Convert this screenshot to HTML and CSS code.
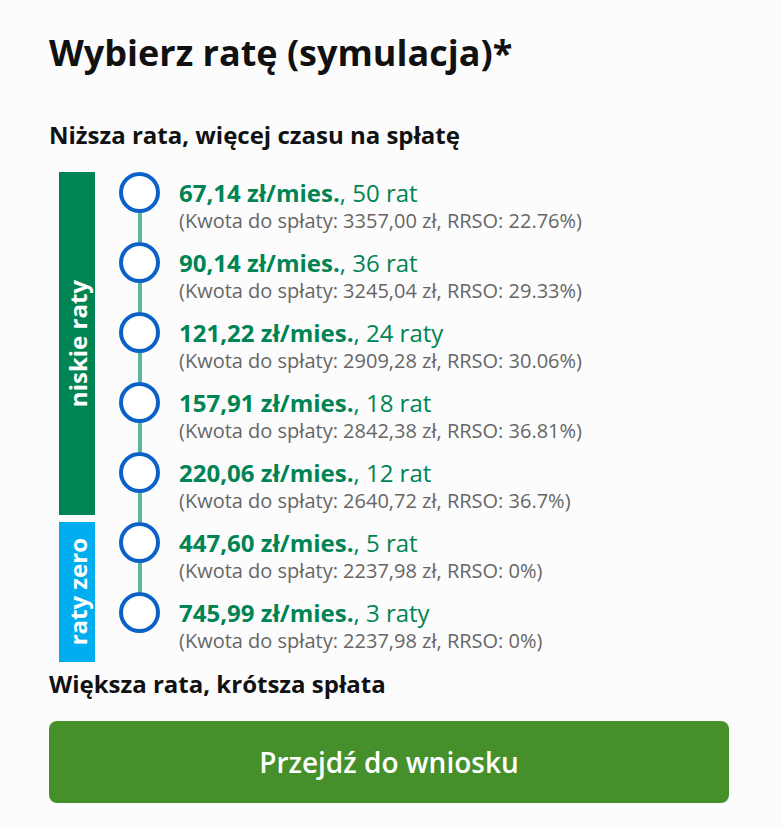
FILE: index.html
```html
<!DOCTYPE html>
<html lang="pl">
<head>
  <meta charset="UTF-8">
  <meta name="viewport" content="width=device-width, initial-scale=1.0">
  <title>Wybierz ratę</title>
  <link rel="stylesheet" href="styles.css">
</head>
<body>
  <div class="simulation">
    <h1 class="title">Wybierz ratę (symulacja)*</h1>
    <p class="hint top">Niższa rata, więcej czasu na spłatę</p>

    <div class="plan">
      <div class="labels">
        <div class="label low"><span>niskie raty</span></div>
        <div class="label zero"><span>raty zero</span></div>
      </div>
      <ul class="options">
        <li class="option">
          <div class="marker"><span class="dot"></span><span class="line"></span></div>
          <div class="info">
            <div class="price"><b>67,14 zł/mies.</b>, 50 rat</div>
            <div class="details">(Kwota do spłaty: 3357,00 zł, RRSO: 22.76%)</div>
          </div>
        </li>
        <li class="option">
          <div class="marker"><span class="dot"></span><span class="line"></span></div>
          <div class="info">
            <div class="price"><b>90,14 zł/mies.</b>, 36 rat</div>
            <div class="details">(Kwota do spłaty: 3245,04 zł, RRSO: 29.33%)</div>
          </div>
        </li>
        <li class="option">
          <div class="marker"><span class="dot"></span><span class="line"></span></div>
          <div class="info">
            <div class="price"><b>121,22 zł/mies.</b>, 24 raty</div>
            <div class="details">(Kwota do spłaty: 2909,28 zł, RRSO: 30.06%)</div>
          </div>
        </li>
        <li class="option">
          <div class="marker"><span class="dot"></span><span class="line"></span></div>
          <div class="info">
            <div class="price"><b>157,91 zł/mies.</b>, 18 rat</div>
            <div class="details">(Kwota do spłaty: 2842,38 zł, RRSO: 36.81%)</div>
          </div>
        </li>
        <li class="option">
          <div class="marker"><span class="dot"></span><span class="line"></span></div>
          <div class="info">
            <div class="price"><b>220,06 zł/mies.</b>, 12 rat</div>
            <div class="details">(Kwota do spłaty: 2640,72 zł, RRSO: 36.7%)</div>
          </div>
        </li>
        <li class="option">
          <div class="marker"><span class="dot"></span><span class="line"></span></div>
          <div class="info">
            <div class="price"><b>447,60 zł/mies.</b>, 5 rat</div>
            <div class="details">(Kwota do spłaty: 2237,98 zł, RRSO: 0%)</div>
          </div>
        </li>
        <li class="option">
          <div class="marker"><span class="dot"></span></div>
          <div class="info">
            <div class="price"><b>745,99 zł/mies.</b>, 3 raty</div>
            <div class="details">(Kwota do spłaty: 2237,98 zł, RRSO: 0%)</div>
          </div>
        </li>
      </ul>
    </div>

    <p class="hint">Większa rata, krótsza spłata</p>
    <button class="submit">Przejdź do wniosku</button>
  </div>
</body>
</html>
```

FILE: styles.css
```css
body {
  margin: 0;
  background-color: #fcfcfc;
  font-family: "Open Sans", sans-serif;
  color: #111;
}

.simulation {
  width: 680px;
  padding: 29px 0 0 49px;
}

.title {
  margin: 0;
  font-size: 36px;
  font-weight: 700;
  line-height: 48px;
}

.hint {
  margin: 6px 0 0;
  font-size: 24px;
  font-weight: 700;
  line-height: 32px;
}

.hint.top {
  margin-top: 42px;
}

.plan {
  display: flex;
  gap: 24px;
  margin: 21px 0 0 10px;
}

.labels {
  display: flex;
  flex-direction: column;
  gap: 7px;
  width: 36px;
}

.label {
  display: flex;
  align-items: center;
  justify-content: center;
  color: #fff;
  font-size: 24px;
  font-weight: 700;
}

.label span {
  writing-mode: vertical-rl;
  transform: rotate(180deg);
}

.label.low {
  background-color: #008453;
  height: 343px;
}

.label.zero {
  background-color: #00aeef;
  height: 140px;
}

.options {
  list-style: none;
  margin: 0;
  padding: 0;
}

.option {
  display: flex;
  gap: 19px;
  height: 70px;
}

.marker {
  display: flex;
  flex-direction: column;
  align-items: center;
  width: 41px;
}

.dot {
  width: 33px;
  height: 33px;
  border: 4px solid #0a62c9;
  border-radius: 50%;
  background-color: #fff;
}

.line {
  flex: 1;
  width: 4px;
  background-color: #5bb8a0;
}

.info {
  padding-top: 6px;
}

.price {
  color: #008453;
  font-size: 24px;
  line-height: 30px;
}

.details {
  color: #666;
  font-size: 20px;
  line-height: 26px;
}

.submit {
  display: block;
  width: 680px;
  height: 82px;
  margin-top: 21px;
  border: none;
  border-radius: 8px;
  background-color: #46902c;
  color: #fff;
  font-family: inherit;
  font-size: 28px;
  font-weight: 600;
  cursor: pointer;
}
```
